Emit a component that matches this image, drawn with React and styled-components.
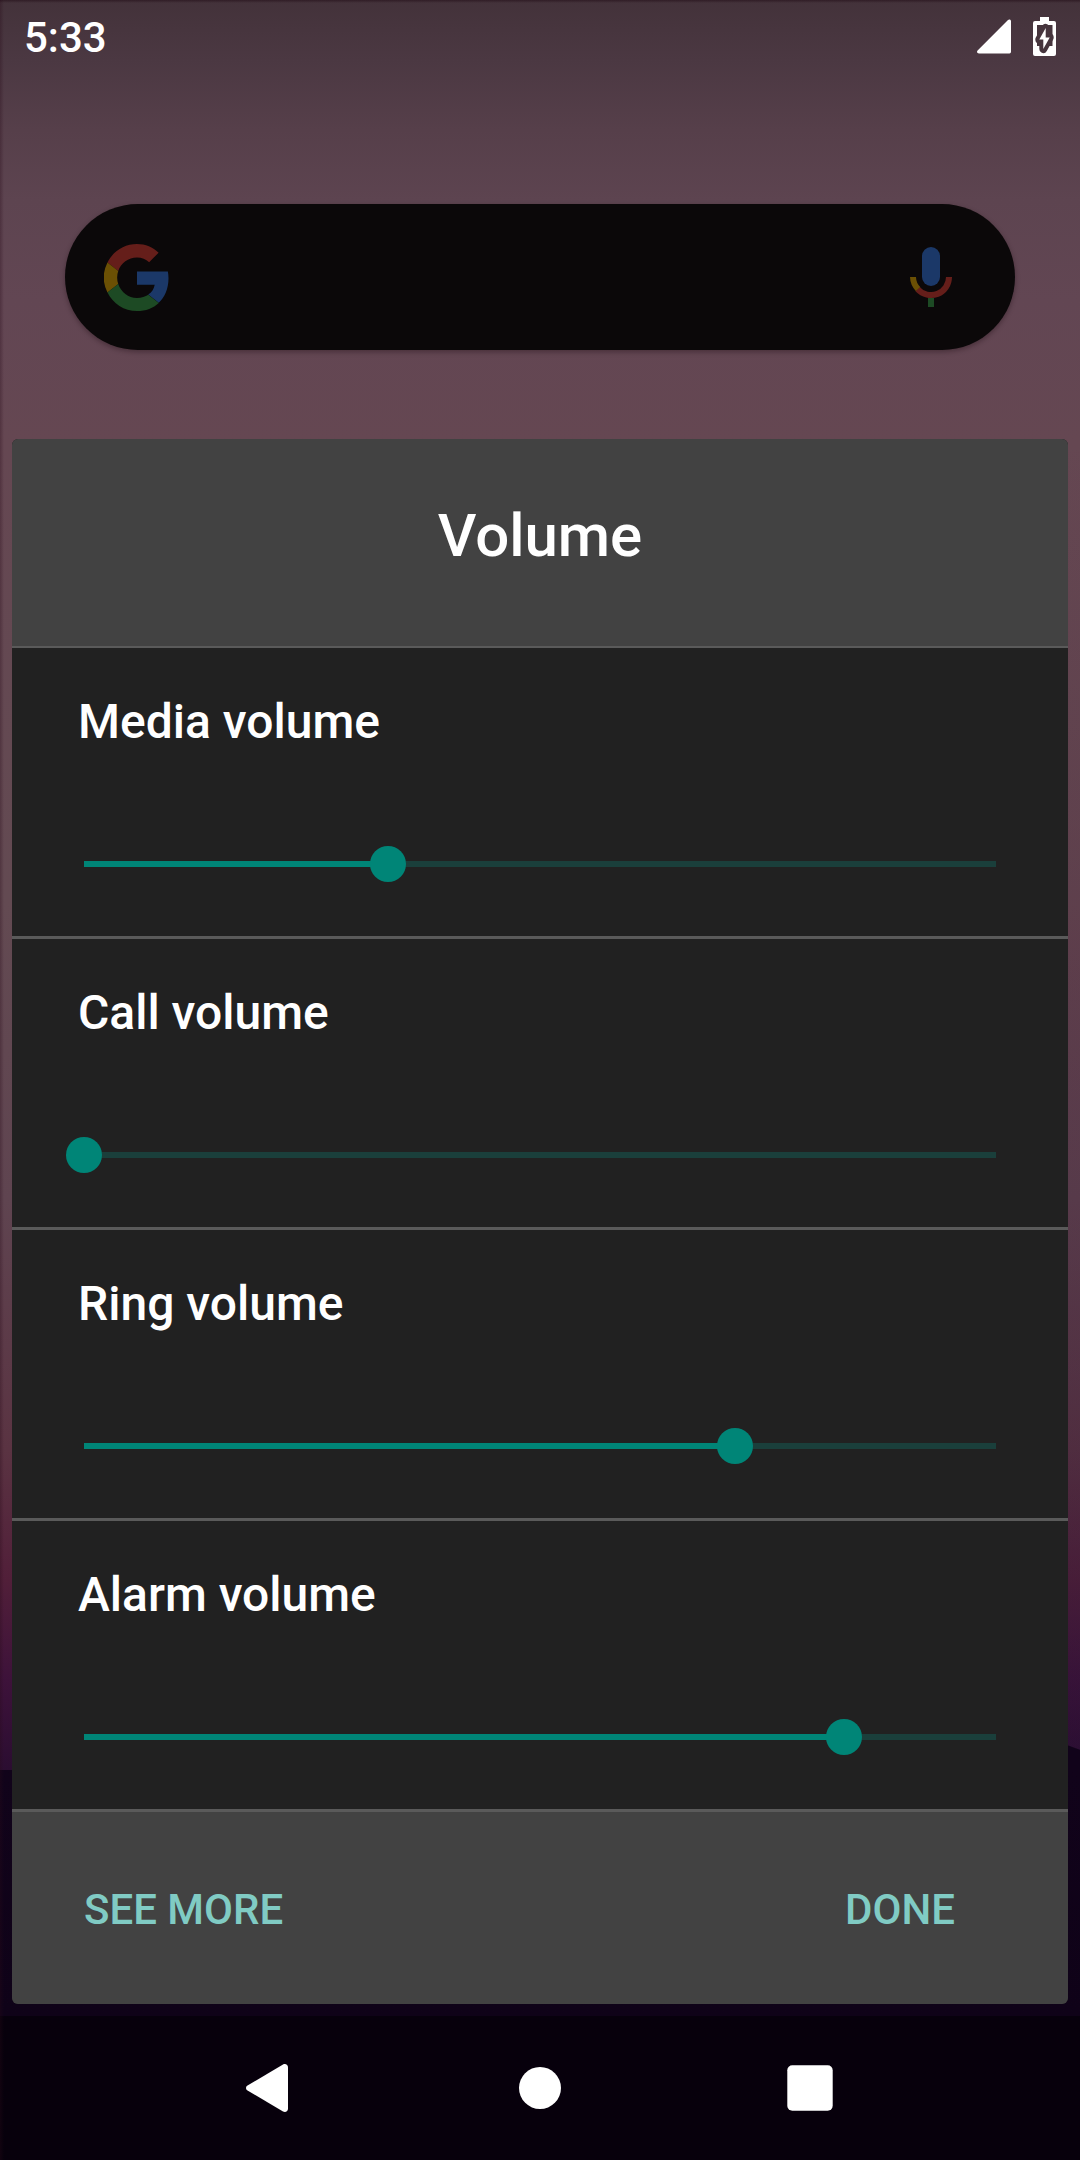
import React from 'react';
import styled, { createGlobalStyle } from 'styled-components';

const GlobalStyle = createGlobalStyle`
    body {
        margin: 0;
        background: #07000c;
        font-family: Roboto, "Liberation Sans", sans-serif;
    }
    * {
        box-sizing: border-box;
    }
`
const Screen = styled.div`
    display: flex;
    flex-direction: column;
    width: 1080px;
    height: 2160px;
    overflow: hidden;
    background:
        linear-gradient(to right, rgba(40, 10, 25, 0.32) 0px, rgba(40, 10, 25, 0) 4px),
        linear-gradient(to bottom, rgba(30, 8, 18, 0.5) 0px, rgba(30, 8, 18, 0) 3px),
        linear-gradient(200deg, transparent 4px, #11031a 5px) right 1745px / 12px 25px no-repeat,
        linear-gradient(to bottom, transparent 1770px, #11031a 1770px, #0f0218 2016px, #07000c 2016px),
        linear-gradient(to bottom, rgba(80, 35, 60, 0), rgba(80, 35, 60, 0.3) 40%, rgba(60, 35, 60, 0.3) 70%, rgba(35, 15, 50, 0.3)) right 440px / 12px 1330px no-repeat,
        linear-gradient(
            to bottom,
            #43323a 0px,
            #4b3842 60px,
            #563f4a 130px,
            #5d4450 200px,
            #624653 300px,
            #654752 440px,
            #634a52 900px,
            #5f4450 1200px,
            #5a3342 1450px,
            #511f39 1580px,
            #3d123a 1680px,
            #2b0d31 1770px
        );
`
const StatusBar = styled.header`
    display: flex;
    align-items: center;
    justify-content: space-between;
    height: 72px;
    padding: 1px 24px 0 24px;
    color: #fff;
`
const Clock = styled.span`
    padding-top: 2px;
    font-size: 42px;
    font-weight: 500;
    line-height: 70px;
`
const StatusIcons = styled.div`
    display: flex;
    align-items: center;
    gap: 22px;
`
const SearchBar = styled.div`
    display: flex;
    align-items: center;
    justify-content: space-between;
    flex: none;
    width: 950px;
    height: 146px;
    margin: 132px 65px 89px;
    padding: 0 63px 0 39px;
    border-radius: 73px;
    background: #0b0809;
    box-shadow: 0 2px 5px rgba(20, 5, 12, 0.35);
`
const Panel = styled.main`
    display: flex;
    flex-direction: column;
    flex: none;
    width: 1056px;
    height: 1565px;
    margin: 0 12px 12px;
    border-radius: 6px;
    overflow: hidden;
    background: #212121;
`
const PanelHeader = styled.div`
    height: 209px;
    padding-top: 62px;
    border-bottom: 2px solid #5a5a5a;
    background: #424242;
    text-align: center;
`
const Title = styled.h1`
    margin: 0;
    color: #fff;
    font-size: 60px;
    font-weight: 500;
    line-height: 70px;
`
const VolumeRow = styled.section`
    height: 291px;
    padding: 49px 72px 0 66px;
    border-bottom: 3px solid #5a5a5a;
`
const Label = styled.h2`
    margin: 0 0 114px;
    color: #fff;
    font-size: 48px;
    font-weight: 500;
    line-height: 50px;
`
const Track = styled.div`
    position: relative;
    height: 6px;
    margin-left: 6px;
    background: #1a3f3b;
`
const Fill = styled.div`
    height: 6px;
    background: #008577;
`
const Thumb = styled.div`
    position: absolute;
    top: -15px;
    width: 36px;
    height: 36px;
    margin-left: -18px;
    border-radius: 50%;
    background: #008577;
`
const Actions = styled.div`
    display: flex;
    align-items: center;
    justify-content: space-between;
    flex: 1;
    padding: 2px 113px 0 72px;
    background: #424242;
`
const ActionButton = styled.button`
    padding: 0;
    border: none;
    background: none;
    color: #80cbc4;
    font-family: inherit;
    font-size: 42px;
    font-weight: 500;
`
const NavBar = styled.nav`
    display: grid;
    grid-template-columns: repeat(3, 270px);
    justify-content: center;
    justify-items: center;
    align-items: center;
    flex: 1;
`
const BackButton = styled.svg`
    margin-right: 6px;
`

const SignalIcon = () => (
    <svg width="34" height="35" viewBox="0 0 34 35" aria-hidden="true">
        <path d="M2 34.5h30.5a1.7 1.7 0 0 0 1.5-1.7V2.2c0-1.7-1.8-2.4-3-1.2L.6 31.5C-.6 32.7.3 34.5 2 34.5z" fill="#fff"/>
    </svg>
)

const BatteryIcon = () => (
    <svg width="23" height="39" viewBox="0 0 23 39" aria-hidden="true">
        <path d="M7 0h9v4h5a2 2 0 0 1 2 2v31a2 2 0 0 1-2 2H2a2 2 0 0 1-2-2V6a2 2 0 0 1 2-2h5z" fill="#fff"/>
        <path d="M4 8h15.500v21H4z" fill="#46353d"/>
        <path d="M12.700 11v9.500h4L10.300 32v-9.500h-4z" fill="#fff" stroke="#46353d" strokeWidth="8" strokeLinejoin="round"/>
        <path d="M12.700 11v9.500h4L10.300 32v-9.500h-4z" fill="#fff"/>
    </svg>
)

const GoogleIcon = () => (
    <svg width="66" height="67" viewBox="2 2 44 44" preserveAspectRatio="none" aria-hidden="true">
        <path fill="#651e1a" d="M24 10.900c3.200 0 5.900 1.100 8.100 3.100l6.300-6.300C34.600 4.100 29.700 2 24 2 15.400 2 8 6.900 4.300 14.100l7.200 5.600C13.300 14.600 18.200 10.900 24 10.900z"/>
        <path fill="#1b3868" d="M45 24.500c0-1.600-.2-3.100-.4-4.500H24v8.700h11.800c-.5 2.700-2 5-4.300 6.500l7 5.400c4.100-3.800 6.500-9.400 6.500-16.100z"/>
        <path fill="#6b5004" d="M11.500 28.200a13 13 0 0 1 0-8.500l-7.200-5.600a22 22 0 0 0 0 19.800z"/>
        <path fill="#1d4a24" d="M24 46c5.900 0 10.900-1.900 14.500-5.300l-7-5.400c-1.900 1.300-4.500 2.100-7.500 2.100-5.800 0-10.700-3.900-12.500-9.200l-7.200 5.600C8 41.100 15.400 46 24 46z"/>
    </svg>
)

const MicIcon = () => (
    <svg width="42" height="60" viewBox="0 0 42 60" aria-hidden="true">
        <rect x="12" y="0" width="18" height="39" rx="9" fill="#1b3868"/>
        <path d="M3 30a18 18 0 0 0 5.300 12.300" fill="none" stroke="#6b5004" strokeWidth="6"/>
        <path d="M7.700 42.200A18 18 0 0 0 39 30" fill="none" stroke="#651e1a" strokeWidth="6"/>
        <path d="M18 51h6v9h-6z" fill="#1d4a24"/>
    </svg>
)

const BackIcon = () => (
    <BackButton width="42" height="48" viewBox="0 0 42 48" aria-hidden="true">
        <path d="M37 .5c2.500-1.300 5 .2 5 3v41c0 2.800-2.500 4.300-5 3L1.500 26.500c-2-1.200-2-3.800 0-5z" fill="#fff"/>
    </BackButton>
)

const HomeIcon = () => (
    <svg width="42" height="42" viewBox="0 0 42 42" aria-hidden="true">
        <circle cx="21" cy="21" r="21" fill="#fff"/>
    </svg>
)

const RecentsIcon = () => (
    <svg width="46" height="46" viewBox="0 0 46 46" aria-hidden="true">
        <rect x="0.300" y="0.300" width="45.400" height="45.400" rx="5" fill="#fff"/>
    </svg>
)

const volumes = [
    { label: 'Media volume', level: 33.33 },
    { label: 'Call volume', level: 0 },
    { label: 'Ring volume', level: 71.43 },
    { label: 'Alarm volume', level: 83.33 },
]

const VolumeSlider = ({ label, level }) => (
    <VolumeRow>
        <Label>{label}</Label>
        <Track role="slider" aria-label={label} aria-valuenow={level}>
            <Fill style={{ width: `${level}%` }}/>
            <Thumb style={{ left: `${level}%` }}/>
        </Track>
    </VolumeRow>
)

export default function App() {
    return (
        <>
            <GlobalStyle/>
            <Screen>
                <StatusBar>
                    <Clock>5:33</Clock>
                    <StatusIcons>
                        <SignalIcon/>
                        <BatteryIcon/>
                    </StatusIcons>
                </StatusBar>
                <SearchBar>
                    <GoogleIcon/>
                    <MicIcon/>
                </SearchBar>
                <Panel>
                    <PanelHeader>
                        <Title>Volume</Title>
                    </PanelHeader>
                    {volumes.map((volume) => (
                        <VolumeSlider key={volume.label} {...volume}/>
                    ))}
                    <Actions>
                        <ActionButton>SEE MORE</ActionButton>
                        <ActionButton>DONE</ActionButton>
                    </Actions>
                </Panel>
                <NavBar>
                    <BackIcon/>
                    <HomeIcon/>
                    <RecentsIcon/>
                </NavBar>
            </Screen>
        </>
    )
}
